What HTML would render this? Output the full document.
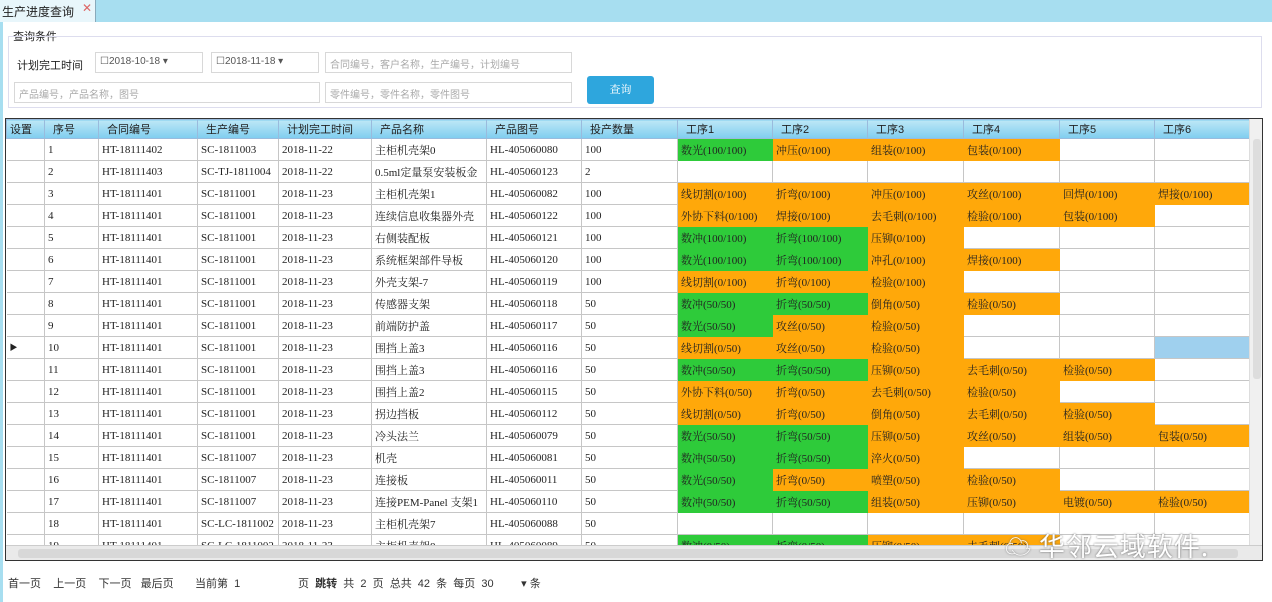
<!DOCTYPE html><html><head><meta charset="utf-8"><style>
*{margin:0;padding:0;box-sizing:border-box}
body{width:1272px;height:602px;overflow:hidden;background:#fff;font-family:"Liberation Serif","Noto Serif CJK SC",serif;font-size:11px;color:#222;position:relative}
.top{position:absolute;left:0;top:0;width:1272px;height:22px;background:#a7def0}
.tab{position:absolute;left:0;top:0;width:96px;height:22px;background:#e8f6fb;border-right:1px solid #8ab;font-size:12px;padding:3px 2px;font-family:"Liberation Sans","Noto Sans CJK SC",sans-serif}
.tab b{color:#d66;font-weight:normal;position:absolute;left:82px;top:1px}
.side{position:absolute;left:0;top:22px;width:3px;height:580px;background:#a7def0}
.panel{position:absolute;left:8px;top:36px;width:1254px;height:72px;border:1px solid #dde}
.lbl{position:absolute;font-size:11px;font-family:"Liberation Sans","Noto Sans CJK SC",sans-serif}
.inp{position:absolute;height:21px;border:1px solid #d8d8d8;color:#aaa;font-size:10px;padding:3px 4px;font-family:"Liberation Sans","Noto Sans CJK SC",sans-serif}
.btn{position:absolute;left:587px;top:76px;width:67px;height:28px;background:#2ea6dd;border-radius:3px;color:#fff;text-align:center;line-height:28px;font-size:11px}
.grid{position:absolute;left:5px;top:118px;width:1258px;height:443px;border:1px solid #333;overflow:hidden}
table{border-collapse:collapse;table-layout:fixed;position:absolute;left:0;top:0}
td,th{height:22px;border:1px solid #c6c6c6;white-space:nowrap;overflow:hidden;padding-left:3px;font-weight:normal;text-align:left}
th{height:19px;background:linear-gradient(#bde7f6,#7fcdef);border-color:#9bd;font-family:"Liberation Sans","Noto Sans CJK SC",sans-serif;padding-left:8px}
td.g{background:#2ecb3a;border-color:#2ecb3a}
td.o{background:#ffa80a;border-color:#ffa80a}
td.s{background:#9fd0ee}
td:first-child{border-left:none}
.vs{position:absolute;left:1243px;top:0;width:14px;height:426px;background:#f0f0f0;border-left:1px solid #ddd}
.vs i{position:absolute;left:3px;top:20px;width:8px;height:240px;background:#ddd;border-radius:3px}
.hs{position:absolute;left:0;top:426px;width:1257px;height:16px;background:#eaeaea;border-top:1px solid #ccc}
.hs i{position:absolute;left:12px;top:3px;width:1220px;height:9px;background:#d8d8d8;border-radius:3px}
.foot{position:absolute;top:575px;font-size:11px;color:#333;font-family:"Liberation Sans","Noto Sans CJK SC",sans-serif}
.wm{position:absolute;left:1005px;top:527px;font-size:26px;color:#fff;font-family:"Noto Sans CJK SC",sans-serif;text-shadow:0 0 2px #666;letter-spacing:1px}
</style></head><body>
<div class="top"><div class="tab">生产进度查询<b>✕</b></div></div>
<div class="side"></div>
<div class="lbl" style="left:13px;top:28px">查询条件</div>
<div class="panel"></div>
<div class="lbl" style="left:17px;top:57px">计划完工时间</div>
<div class="inp" style="left:95px;top:52px;width:108px;color:#555">☐2018-10-18 ▾</div>
<div class="inp" style="left:211px;top:52px;width:108px;color:#555">☐2018-11-18 ▾</div>
<div class="inp" style="left:325px;top:52px;width:247px">合同编号，客户名称，生产编号，计划编号</div>
<div class="inp" style="left:14px;top:82px;width:306px">产品编号，产品名称，图号</div>
<div class="inp" style="left:325px;top:82px;width:247px">零件编号，零件名称，零件图号</div>
<div class="btn">查询</div>
<div class="grid">
<table style="width:1243px">
<colgroup><col style="width:38px"><col style="width:54px"><col style="width:99px"><col style="width:81px"><col style="width:93px"><col style="width:115px"><col style="width:95px"><col style="width:96px"><col style="width:95px"><col style="width:95px"><col style="width:96px"><col style="width:96px"><col style="width:95px"><col style="width:95px"></colgroup>
<tr><th style="padding-left:3px">设置</th><th>序号</th><th>合同编号</th><th>生产编号</th><th>计划完工时间</th><th>产品名称</th><th>产品图号</th><th>投产数量</th><th>工序1</th><th>工序2</th><th>工序3</th><th>工序4</th><th>工序5</th><th>工序6</th></tr>
<tr><td></td><td>1</td><td>HT-18111402</td><td>SC-1811003</td><td>2018-11-22</td><td>主柜机壳架0</td><td>HL-405060080</td><td>100</td><td class="g">数光(100/100)</td><td class="o">冲压(0/100)</td><td class="o">组装(0/100)</td><td class="o">包装(0/100)</td><td></td><td></td></tr>
<tr><td></td><td>2</td><td>HT-18111403</td><td>SC-TJ-1811004</td><td>2018-11-22</td><td>0.5ml定量泵安装板金</td><td>HL-405060123</td><td>2</td><td></td><td></td><td></td><td></td><td></td><td></td></tr>
<tr><td></td><td>3</td><td>HT-18111401</td><td>SC-1811001</td><td>2018-11-23</td><td>主柜机壳架1</td><td>HL-405060082</td><td>100</td><td class="o">线切割(0/100)</td><td class="o">折弯(0/100)</td><td class="o">冲压(0/100)</td><td class="o">攻丝(0/100)</td><td class="o">回焊(0/100)</td><td class="o">焊接(0/100)</td></tr>
<tr><td></td><td>4</td><td>HT-18111401</td><td>SC-1811001</td><td>2018-11-23</td><td>连续信息收集器外壳</td><td>HL-405060122</td><td>100</td><td class="o">外协下料(0/100)</td><td class="o">焊接(0/100)</td><td class="o">去毛刺(0/100)</td><td class="o">检验(0/100)</td><td class="o">包装(0/100)</td><td></td></tr>
<tr><td></td><td>5</td><td>HT-18111401</td><td>SC-1811001</td><td>2018-11-23</td><td>右侧装配板</td><td>HL-405060121</td><td>100</td><td class="g">数冲(100/100)</td><td class="g">折弯(100/100)</td><td class="o">压铆(0/100)</td><td></td><td></td><td></td></tr>
<tr><td></td><td>6</td><td>HT-18111401</td><td>SC-1811001</td><td>2018-11-23</td><td>系统框架部件导板</td><td>HL-405060120</td><td>100</td><td class="g">数光(100/100)</td><td class="g">折弯(100/100)</td><td class="o">冲孔(0/100)</td><td class="o">焊接(0/100)</td><td></td><td></td></tr>
<tr><td></td><td>7</td><td>HT-18111401</td><td>SC-1811001</td><td>2018-11-23</td><td>外壳支架-7</td><td>HL-405060119</td><td>100</td><td class="o">线切割(0/100)</td><td class="o">折弯(0/100)</td><td class="o">检验(0/100)</td><td></td><td></td><td></td></tr>
<tr><td></td><td>8</td><td>HT-18111401</td><td>SC-1811001</td><td>2018-11-23</td><td>传感器支架</td><td>HL-405060118</td><td>50</td><td class="g">数冲(50/50)</td><td class="g">折弯(50/50)</td><td class="o">倒角(0/50)</td><td class="o">检验(0/50)</td><td></td><td></td></tr>
<tr><td></td><td>9</td><td>HT-18111401</td><td>SC-1811001</td><td>2018-11-23</td><td>前端防护盖</td><td>HL-405060117</td><td>50</td><td class="g">数光(50/50)</td><td class="o">攻丝(0/50)</td><td class="o">检验(0/50)</td><td></td><td></td><td></td></tr>
<tr><td style="font-size:8px">▶</td><td>10</td><td>HT-18111401</td><td>SC-1811001</td><td>2018-11-23</td><td>围挡上盖3</td><td>HL-405060116</td><td>50</td><td class="o">线切割(0/50)</td><td class="o">攻丝(0/50)</td><td class="o">检验(0/50)</td><td></td><td></td><td class="s"></td></tr>
<tr><td></td><td>11</td><td>HT-18111401</td><td>SC-1811001</td><td>2018-11-23</td><td>围挡上盖3</td><td>HL-405060116</td><td>50</td><td class="g">数冲(50/50)</td><td class="g">折弯(50/50)</td><td class="o">压铆(0/50)</td><td class="o">去毛刺(0/50)</td><td class="o">检验(0/50)</td><td></td></tr>
<tr><td></td><td>12</td><td>HT-18111401</td><td>SC-1811001</td><td>2018-11-23</td><td>围挡上盖2</td><td>HL-405060115</td><td>50</td><td class="o">外协下料(0/50)</td><td class="o">折弯(0/50)</td><td class="o">去毛刺(0/50)</td><td class="o">检验(0/50)</td><td></td><td></td></tr>
<tr><td></td><td>13</td><td>HT-18111401</td><td>SC-1811001</td><td>2018-11-23</td><td>拐边挡板</td><td>HL-405060112</td><td>50</td><td class="o">线切割(0/50)</td><td class="o">折弯(0/50)</td><td class="o">倒角(0/50)</td><td class="o">去毛刺(0/50)</td><td class="o">检验(0/50)</td><td></td></tr>
<tr><td></td><td>14</td><td>HT-18111401</td><td>SC-1811001</td><td>2018-11-23</td><td>冷头法兰</td><td>HL-405060079</td><td>50</td><td class="g">数光(50/50)</td><td class="g">折弯(50/50)</td><td class="o">压铆(0/50)</td><td class="o">攻丝(0/50)</td><td class="o">组装(0/50)</td><td class="o">包装(0/50)</td></tr>
<tr><td></td><td>15</td><td>HT-18111401</td><td>SC-1811007</td><td>2018-11-23</td><td>机壳</td><td>HL-405060081</td><td>50</td><td class="g">数冲(50/50)</td><td class="g">折弯(50/50)</td><td class="o">淬火(0/50)</td><td></td><td></td><td></td></tr>
<tr><td></td><td>16</td><td>HT-18111401</td><td>SC-1811007</td><td>2018-11-23</td><td>连接板</td><td>HL-405060011</td><td>50</td><td class="g">数光(50/50)</td><td class="o">折弯(0/50)</td><td class="o">喷塑(0/50)</td><td class="o">检验(0/50)</td><td></td><td></td></tr>
<tr><td></td><td>17</td><td>HT-18111401</td><td>SC-1811007</td><td>2018-11-23</td><td>连接PEM-Panel 支架1</td><td>HL-405060110</td><td>50</td><td class="g">数冲(50/50)</td><td class="g">折弯(50/50)</td><td class="o">组装(0/50)</td><td class="o">压铆(0/50)</td><td class="o">电镀(0/50)</td><td class="o">检验(0/50)</td></tr>
<tr><td></td><td>18</td><td>HT-18111401</td><td>SC-LC-1811002</td><td>2018-11-23</td><td>主柜机壳架7</td><td>HL-405060088</td><td>50</td><td></td><td></td><td></td><td></td><td></td><td></td></tr>
<tr><td></td><td>19</td><td>HT-18111401</td><td>SC-LC-1811002</td><td>2018-11-23</td><td>主柜机壳架8</td><td>HL-405060089</td><td>50</td><td class="g">数冲(0/50)</td><td class="g">折弯(0/50)</td><td class="o">压铆(0/50)</td><td class="o">去毛刺(0/50)</td><td></td><td></td></tr>
</table>
<div class="vs"><i></i></div>
<div class="hs"><i></i></div>
</div>
<div class="wm">☁ 华邻云域软件.</div>
<div class="foot" style="left:8px">首一页&nbsp;&nbsp;&nbsp;&nbsp;上一页&nbsp;&nbsp;&nbsp;&nbsp;下一页&nbsp;&nbsp;&nbsp;最后页&nbsp;&nbsp;&nbsp;&nbsp;&nbsp;&nbsp;&nbsp;当前第&nbsp;&nbsp;1</div>
<div class="foot" style="left:298px">页&nbsp;&nbsp;<b>跳转</b>&nbsp;&nbsp;共&nbsp;&nbsp;2&nbsp;&nbsp;页&nbsp;&nbsp;总共&nbsp;&nbsp;42&nbsp;&nbsp;条&nbsp;&nbsp;每页&nbsp;&nbsp;30&nbsp;&nbsp;&nbsp;&nbsp;&nbsp;&nbsp;&nbsp;&nbsp;&nbsp;▾&nbsp;条</div>
</body></html>
